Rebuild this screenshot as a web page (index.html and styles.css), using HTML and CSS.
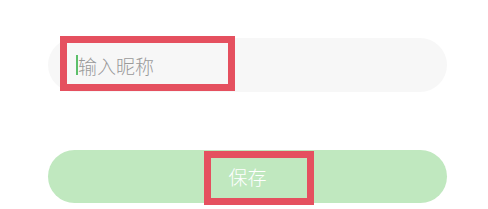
FILE: index.html
```html
<!DOCTYPE html>
<html lang="zh">
<head>
    <meta charset="UTF-8">
    <meta name="viewport" content="width=device-width, initial-scale=1.0">
    <title>修改昵称</title>
    <link rel="stylesheet" href="styles.css">
</head>
<body>
    <div class="form">
        <div class="name-field">
            <span class="cursor"></span>
            <span class="placeholder">输入昵称</span>
            <div class="mark mark-input"></div>
        </div>

        <div class="save-btn">
            <span>保存</span>
            <div class="mark mark-save"></div>
        </div>
    </div>
</body>
</html>
```

FILE: styles.css
```css
* {
    margin: 0;
    padding: 0;
    box-sizing: border-box;
}

body {
    font-family: 'Noto Sans CJK SC', 'Noto Sans', sans-serif;
    background: #ffffff;
    width: 488px;
    height: 209px;
    overflow: hidden;
}

.form {
    padding: 38px 41px 0 48px;
    display: flex;
    flex-direction: column;
    gap: 58px;
}

.name-field {
    position: relative;
    height: 54px;
    border-radius: 27px;
    background: #f7f7f7;
    display: flex;
    align-items: center;
    padding-left: 28px;
}

.cursor {
    width: 2px;
    height: 20px;
    background: #5cbf6a;
}

.placeholder {
    font-size: 19px;
    font-weight: 300;
    color: #9a9a9a;
}

.save-btn {
    position: relative;
    height: 53px;
    border-radius: 27px;
    background: #c0e8bf;
    display: flex;
    align-items: center;
    justify-content: center;
    color: #ffffff;
    font-size: 19px;
    font-weight: 300;
}

.mark {
    position: absolute;
    border: 7px solid #e5505f;
}

.mark-input {
    left: 12px;
    top: -2px;
    width: 175px;
    height: 55px;
}

.mark-save {
    left: 156px;
    top: 1px;
    width: 110px;
    height: 54px;
}
```
